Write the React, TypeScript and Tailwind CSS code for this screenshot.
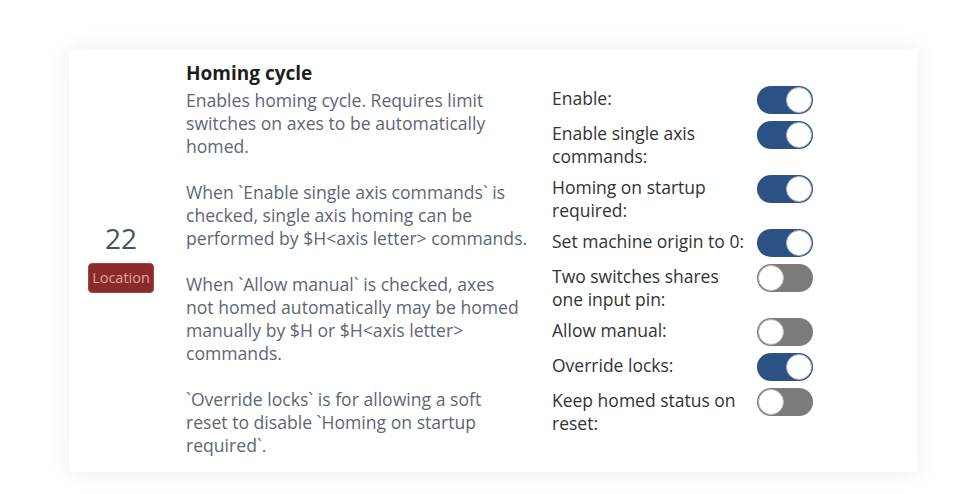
import React from 'react'

type Setting = {
  label: string;
  on: boolean;
}

const settings: Setting[] = [
  { label: 'Enable:', on: true },
  { label: 'Enable single axis commands:', on: true },
  { label: 'Homing on startup required:', on: true },
  { label: 'Set machine origin to 0:', on: true },
  { label: 'Two switches shares one input pin:', on: false },
  { label: 'Allow manual:', on: false },
  { label: 'Override locks:', on: true },
  { label: 'Keep homed status on reset:', on: false },
]

// line breaks follow the original wrapping
const paragraphs: string[][] = [
  ['Enables homing cycle. Requires limit', 'switches on axes to be automatically', 'homed.'],
  ['When `Enable single axis commands` is', 'checked, single axis homing can be', 'performed by $H<axis letter> commands.'],
  ['When `Allow manual` is checked, axes', 'not homed automatically may be homed', 'manually by $H or $H<axis letter>', 'commands.'],
  ['`Override locks` is for allowing a soft', 'reset to disable `Homing on startup', 'required`.'],
]

function Toggle({ on }: { on: boolean }) {
  return (
    <div
      className={`relative w-[56px] h-[28px] shrink-0 rounded-full ${
        on ? 'bg-[#2c5285]' : 'bg-[#7b7b7b]'
      }`}
    >
      <span
        className={`absolute top-[1px] w-[26px] h-[26px] rounded-full bg-white border ${
          on ? 'right-[1px] border-[#9fb4d0]' : 'left-[1px] border-[#b8b8b8]'
        }`}
      />
    </div>
  )
}

export default function App() {
  return (
    <div className="min-h-screen bg-white pt-[49px] pl-[69px]" style={{ fontFamily: '"Open Sans", sans-serif' }}>
      <div className="w-[848px] h-[423px] bg-white shadow-[0_0_22px_rgba(0,0,0,0.08)] flex">
        {/* Index + location badge */}
        <div className="w-[104px] pb-[5px] flex flex-col items-center justify-center">
          <div className="text-[28px] leading-[30px] text-[#4a5261]">22</div>
          <div className="mt-[10px] w-[66px] h-[30px] rounded-[4px] bg-[#8a2a2a] border border-[#a44] flex items-center justify-center text-[14.5px] text-[#e7a3a3]">
            Location
          </div>
        </div>

        {/* Description */}
        <div className="ml-[13px] w-[346px] pt-[11px]">
          <h3 className="text-[19px] leading-[26px] font-bold text-[#1e1e1e] mb-[3px]">Homing cycle</h3>
          <div className="text-[17.6px] leading-[23px] text-[#5e6675] space-y-[23px]">
            {paragraphs.map((lines, i) => (
              <p key={i}>
                {lines.map((line, j) => (
                  <span key={j} className="block whitespace-nowrap">{line}</span>
                ))}
              </p>
            ))}
          </div>
        </div>

        {/* Settings */}
        <div className="ml-[20px] flex flex-col justify-center gap-[7px]">
          {settings.map((s, i) => (
            <div key={i} className="flex items-start gap-[7px]">
              <div className="w-[198px] pt-[1px] text-[17.5px] leading-[23px] text-[#333]">{s.label}</div>
              <Toggle on={s.on} />
            </div>
          ))}
        </div>
      </div>
    </div>
  )
}
